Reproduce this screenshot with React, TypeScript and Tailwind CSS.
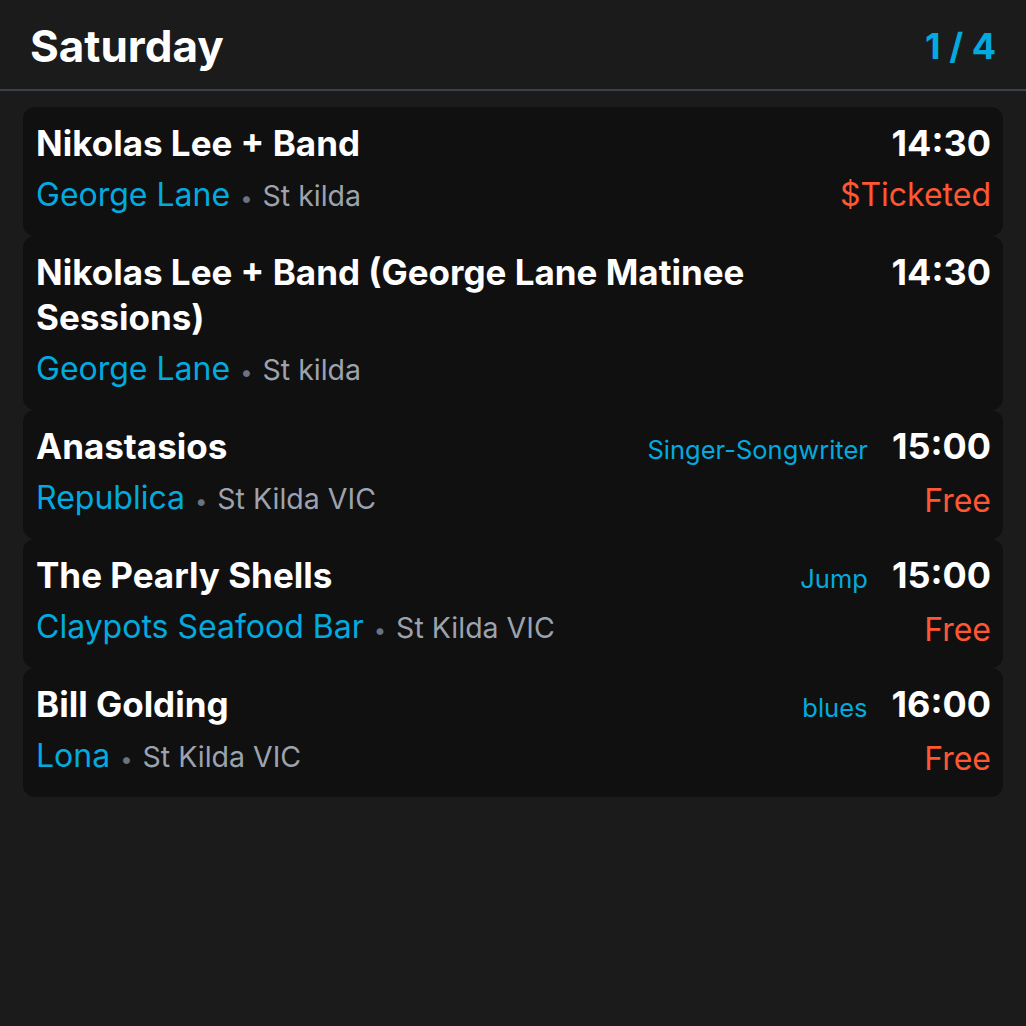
const events = [
  {
    title: "Nikolas Lee + Band",
    venue: "George Lane",
    place: "St kilda",
    time: "14:30",
    price: "$Ticketed",
  },
  {
    title: "Nikolas Lee + Band (George Lane Matinee Sessions)",
    venue: "George Lane",
    place: "St kilda",
    time: "14:30",
  },
  {
    title: "Anastasios",
    venue: "Republica",
    place: "St Kilda VIC",
    genre: "Singer-Songwriter",
    time: "15:00",
    price: "Free",
  },
  {
    title: "The Pearly Shells",
    venue: "Claypots Seafood Bar",
    place: "St Kilda VIC",
    genre: "Jump",
    time: "15:00",
    price: "Free",
  },
  {
    title: "Bill Golding",
    venue: "Lona",
    place: "St Kilda VIC",
    genre: "blues",
    time: "16:00",
    price: "Free",
  },
];

type Gig = {
  title: string;
  venue: string;
  place: string;
  genre?: string;
  time: string;
  price?: string;
};

function GigCard({ gig }: { gig: Gig }) {
  return (
    <div className="flex gap-6 rounded-xl bg-[#101010] pb-[16px] pl-[13px] pr-[12px] pt-[14px]">
      <div className="min-w-0 flex-1">
        <div className="text-[35px] font-bold leading-[45px] text-white">
          {gig.title}
        </div>
        <div className="mt-[7px] flex items-baseline leading-[44px]">
          <span className="text-[32px] text-[#02aadf]">{gig.venue}</span>
          <span className="mx-[10px] text-[22px] text-[#6b7280]">•</span>
          <span className="text-[28.5px] text-[#9ca3af]">{gig.place}</span>
        </div>
      </div>
      <div className="flex shrink-0 flex-col items-end">
        <div className="flex items-baseline gap-6 leading-[45px]">
          {gig.genre && (
            <span className="text-[25.5px] text-[#02aadf]">{gig.genre}</span>
          )}
          <span className="text-[36px] font-bold text-white">{gig.time}</span>
        </div>
        {gig.price && (
          <div className="mt-[7px] text-[32px] leading-[44px] text-[#ff5733]">
            {gig.price}
          </div>
        )}
      </div>
    </div>
  );
}

export default function App() {
  return (
    <div
      className="min-h-screen bg-[#1b1b1b]"
      style={{ fontFamily: "Inter, 'Noto Sans', sans-serif" }}
    >
      <header className="flex h-[91px] items-center justify-between border-b-2 border-[#3a404c] px-[30px] pt-[3px]">
        <h1 className="text-[44px] font-bold text-white">Saturday</h1>
        <span className="text-[36px] font-bold text-[#02aadf]">1 / 4</span>
      </header>
      <div className="flex flex-col px-[23px] pt-4">
        {events.map((gig, i) => (
          <GigCard key={i} gig={gig} />
        ))}
      </div>
    </div>
  );
}
